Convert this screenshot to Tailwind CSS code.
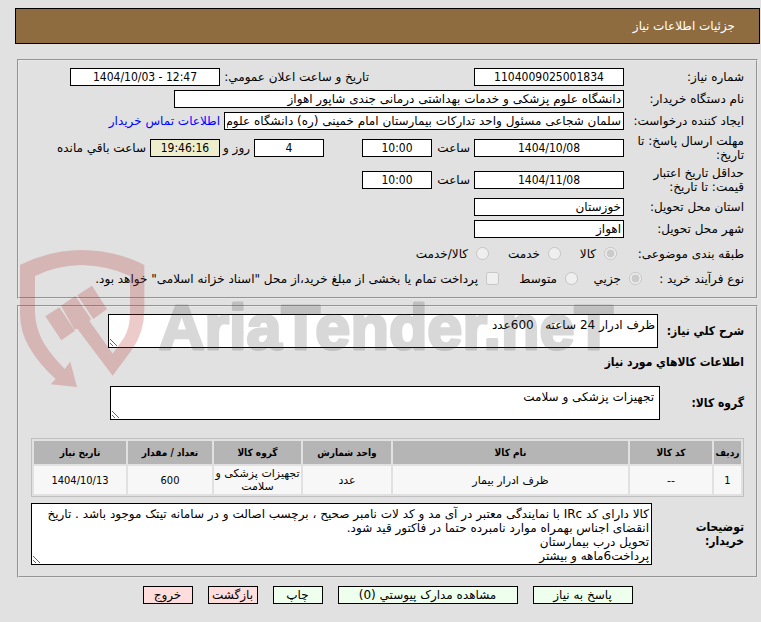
<!DOCTYPE html>
<html lang="fa" dir="rtl">
<head>
  <meta charset="UTF-8">
  <title>جزئیات اطلاعات نیاز</title>
  <script src="https://cdn.jsdelivr.net/npm/@tailwindcss/browser@4"></script>
</head>
<body class="relative bg-[#e1e1e1] text-black text-xs leading-[14px] font-['DejaVu_Sans',sans-serif] pt-2 pl-[15px] pr-px">

  <header class="h-9 flex items-center bg-[#8f6c40] border border-black text-white px-6">
    <h1>جزئیات اطلاعات نیاز</h1>
  </header>

  <form>
    <!-- Need details -->
    <fieldset class="mt-[15px] mx-0.5 border-2 [border-style:groove] border-[#e8e8e8] pt-[5px] pb-[1px] pr-3 pl-3">
      <div class="flex items-center h-[22px]">
        <label for="needNo" class="w-[120px]">شماره نیاز:</label>
        <input id="needNo" type="text" value="1104009025001834" class="w-[150px] h-[18px] px-0.5 bg-white border border-black text-center font-['DejaVu_Sans_Condensed','DejaVu_Sans',sans-serif]">
        <label for="announceDate" class="w-[254px] pr-[105px] whitespace-nowrap">تاریخ و ساعت اعلان عمومي:</label>
        <input id="announceDate" type="text" dir="ltr" value="1404/10/03 - 12:47" class="w-[150px] h-[18px] px-0.5 bg-white border border-black text-center font-['DejaVu_Sans_Condensed','DejaVu_Sans',sans-serif]">
      </div>
      <div class="flex items-center h-[22px]">
        <label for="buyer" class="w-[120px]">نام دستگاه خریدار:</label>
        <input id="buyer" type="text" value="دانشگاه علوم پزشکی و خدمات بهداشتی درمانی جندی شاپور اهواز" class="w-[450px] h-[18px] px-0.5 bg-white border border-black">
      </div>
      <div class="flex items-center h-[22px]">
        <label for="creator" class="w-[120px] whitespace-nowrap">ایجاد کننده درخواست:</label>
        <input id="creator" type="text" value="سلمان شجاعی مسئول واحد تدارکات بیمارستان امام خمینی (ره) دانشگاه علوم پزشکی جندی شاپور" class="w-[400px] h-[18px] px-0.5 bg-white border border-black">
        <a href="#" class="mr-1 text-[#0000ff]">اطلاعات تماس خریدار</a>
      </div>
      <div class="flex items-center h-8">
        <label for="replyDate" class="w-[120px] pl-1">مهلت ارسال پاسخ: تا تاریخ:</label>
        <input id="replyDate" type="text" value="1404/10/08" class="w-[150px] h-[18px] px-0.5 bg-white border border-black text-center font-['DejaVu_Sans_Condensed','DejaVu_Sans',sans-serif]">
        <label for="replyTime" class="w-[42px] pr-1">ساعت</label>
        <input id="replyTime" type="text" value="10:00" class="w-[70px] h-[18px] px-0.5 bg-white border border-black text-center font-['DejaVu_Sans_Condensed','DejaVu_Sans',sans-serif]">
        <input id="daysLeft" type="text" value="4" class="mr-[38px] w-[70px] h-[18px] px-0.5 bg-white border border-black text-center font-['DejaVu_Sans_Condensed','DejaVu_Sans',sans-serif]">
        <label for="daysLeft" class="w-[34px] pr-1 whitespace-nowrap">روز و</label>
        <input id="timeLeft" type="text" value="19:46:16" class="w-[70px] h-[18px] px-0.5 bg-[#eeeecc] border border-black text-center font-['DejaVu_Sans_Condensed','DejaVu_Sans',sans-serif]">
        <label for="timeLeft" class="pr-1">ساعت باقي مانده</label>
      </div>
      <div class="flex items-center h-8">
        <label for="priceDate" class="w-[120px] pl-5">حداقل تاریخ اعتبار قیمت: تا تاریخ:</label>
        <input id="priceDate" type="text" value="1404/11/08" class="w-[150px] h-[18px] px-0.5 bg-white border border-black text-center font-['DejaVu_Sans_Condensed','DejaVu_Sans',sans-serif]">
        <label for="priceTime" class="w-[42px] pr-1">ساعت</label>
        <input id="priceTime" type="text" value="10:00" class="w-[70px] h-[18px] px-0.5 bg-white border border-black text-center font-['DejaVu_Sans_Condensed','DejaVu_Sans',sans-serif]">
      </div>
      <div class="flex items-center h-[22px]">
        <label for="province" class="w-[120px]">استان محل تحویل:</label>
        <input id="province" type="text" value="خوزستان" class="w-[150px] h-[18px] px-0.5 bg-white border border-black">
      </div>
      <div class="flex items-center h-[22px]">
        <label for="city" class="w-[120px]">شهر محل تحویل:</label>
        <input id="city" type="text" value="اهواز" class="w-[150px] h-[18px] px-0.5 bg-white border border-black">
      </div>
      <div class="flex items-center h-[27px]">
        <span class="w-[127px]">طبقه بندی موضوعی:</span>
        <label class="flex items-center gap-2 w-14"><input type="radio" name="kind" checked disabled>کالا</label>
        <label class="flex items-center gap-2 w-[72px]"><input type="radio" name="kind" disabled>خدمت</label>
        <label class="flex items-center gap-2"><input type="radio" name="kind" disabled>کالا/خدمت</label>
      </div>
      <div class="flex items-center h-[29px] pb-1.5 whitespace-nowrap">
        <span class="w-[102px]">نوع فرآیند خرید :</span>
        <label class="flex items-center gap-2 w-16"><input type="radio" name="process" checked disabled>جزیي</label>
        <label class="flex items-center gap-2 w-[79px]"><input type="radio" name="process" disabled>متوسط</label>
        <label class="flex items-center gap-2"><input type="checkbox" disabled>پرداخت تمام یا بخشی از مبلغ خرید،از محل "اسناد خزانه اسلامی" خواهد بود.</label>
      </div>
    </fieldset>

    <!-- Requested goods -->
    <fieldset class="mt-1.5 mx-0.5 border-2 [border-style:groove] border-[#e8e8e8] pt-[7px] pb-[11px] pr-3 pl-3">
      <div class="flex items-center">
        <label for="summary" class="w-[86px] font-bold whitespace-nowrap font-['DejaVu_Sans_Condensed','DejaVu_Sans',sans-serif]">شرح کلي نیاز:</label>
        <textarea id="summary" class="w-[550px] h-[34px] px-0.5 py-[3px] bg-white border border-black resize">ظرف ادرار 24 ساعته   600عدد</textarea>
      </div>
      <h2 class="mt-[7px] font-bold font-['DejaVu_Sans_Condensed','DejaVu_Sans',sans-serif]">اطلاعات کالاهاي مورد نیاز</h2>
      <div class="mt-[17px] flex items-center">
        <label for="group" class="w-[84px] font-bold font-['DejaVu_Sans_Condensed','DejaVu_Sans',sans-serif]">گروه کالا:</label>
        <textarea id="group" class="w-[550px] h-[34px] px-[5px] py-[3px] bg-white border border-black resize">تجهیزات پزشکی و سلامت</textarea>
      </div>

      <table class="mt-[18px] w-full table-fixed border-separate border-spacing-[2px] border border-[#c0c0c0] text-center text-[11px] leading-[13px]">
        <thead>
          <tr class="h-[23px] bg-[#b5b5b5] text-[10px] font-['DejaVu_Sans_Condensed','DejaVu_Sans',sans-serif]">
            <th class="w-[27px] p-0">ردیف</th>
            <th class="w-[82px] p-0">کد کالا</th>
            <th class="p-0">نام کالا</th>
            <th class="w-[88px] p-0">واحد شمارش</th>
            <th class="w-[87px] p-0">گروه کالا</th>
            <th class="w-[84px] p-0">تعداد / مقدار</th>
            <th class="w-[92px] p-0">تاریخ نیاز</th>
          </tr>
        </thead>
        <tbody>
          <tr class="h-7 bg-[#f7f7f7]">
            <td class="font-['DejaVu_Sans_Condensed','DejaVu_Sans',sans-serif]">1</td>
            <td>--</td>
            <td>ظرف ادرار بیمار</td>
            <td>عدد</td>
            <td class="p-px">تجهیزات پزشکی و سلامت</td>
            <td class="font-['DejaVu_Sans_Condensed','DejaVu_Sans',sans-serif]">600</td>
            <td class="font-['DejaVu_Sans_Condensed','DejaVu_Sans',sans-serif]">1404/10/13</td>
          </tr>
        </tbody>
      </table>

      <div class="mt-1.5 flex items-center">
        <label for="notes" class="w-[92px] pl-6 font-bold font-['DejaVu_Sans_Condensed','DejaVu_Sans',sans-serif]">توضیحات خریدار:</label>
        <textarea id="notes" class="flex-1 h-[62px] px-0.5 py-[3px] bg-white border border-black resize">کالا دارای کد IRc با نمایندگی معتبر در آی مد و کد لات نامبر صحیح ، برچسب اصالت و در سامانه تیتک موجود باشد . تاریخ انقضای اجناس بهمراه موارد نامبرده حتما در فاکتور قید شود.
تحویل درب بیمارستان
پرداخت6ماهه و بیشتر</textarea>
      </div>
    </fieldset>

    <!-- Actions -->
    <div class="mt-2 flex justify-center gap-[15px] pb-4">
      <button type="button" class="w-[100px] h-[18px] bg-[#eeffee] border border-black">پاسخ به نیاز</button>
      <button type="button" class="w-[180px] h-[18px] bg-[#eeffee] border border-black">مشاهده مدارک پیوستي (0)</button>
      <button type="button" class="w-[50px] h-[18px] bg-[#eeffee] border border-black">چاپ</button>
      <button type="button" class="w-[50px] h-[18px] bg-[#ffdddd] border border-black">بازگشت</button>
      <button type="button" class="w-[50px] h-[18px] bg-[#ffdddd] border border-black">خروج</button>
    </div>
  </form>

  <!-- Watermark -->
  <svg class="absolute left-4 top-[246px] w-[620px] h-36 pointer-events-none" viewBox="16 246 620 144" direction="ltr" aria-hidden="true">
    <g transform="translate(15 245) scale(.3333)" fill="#b93535" opacity=".25">
      <path d="M15 60Q105 15 200 15Q300 15 388 60V195Q388 262 350 315L293 392L187 251L178 253L138 182L181 153L228 221L224 229L293 326L326 280Q345 250 345 205V93Q280 62 200 60Q120 62 60 93V205Q62 250 85 292Q108 330 149 372L166 350L186 426L107 418L122 402Q70 355 42 305Q15 260 15 205Z"/>
      <path d="M91 214L133 187L180 257L139 286Z"/>
      <path d="M187 151L231 122L276 192L235 222Z"/>
    </g>
    <text x="159" y="349" font-family="Liberation Sans, sans-serif" font-weight="700" font-size="63" fill="#414141" stroke="#414141" stroke-width="3" stroke-linejoin="round" opacity=".2">AriaTender.neT</text>
  </svg>

</body>
</html>
